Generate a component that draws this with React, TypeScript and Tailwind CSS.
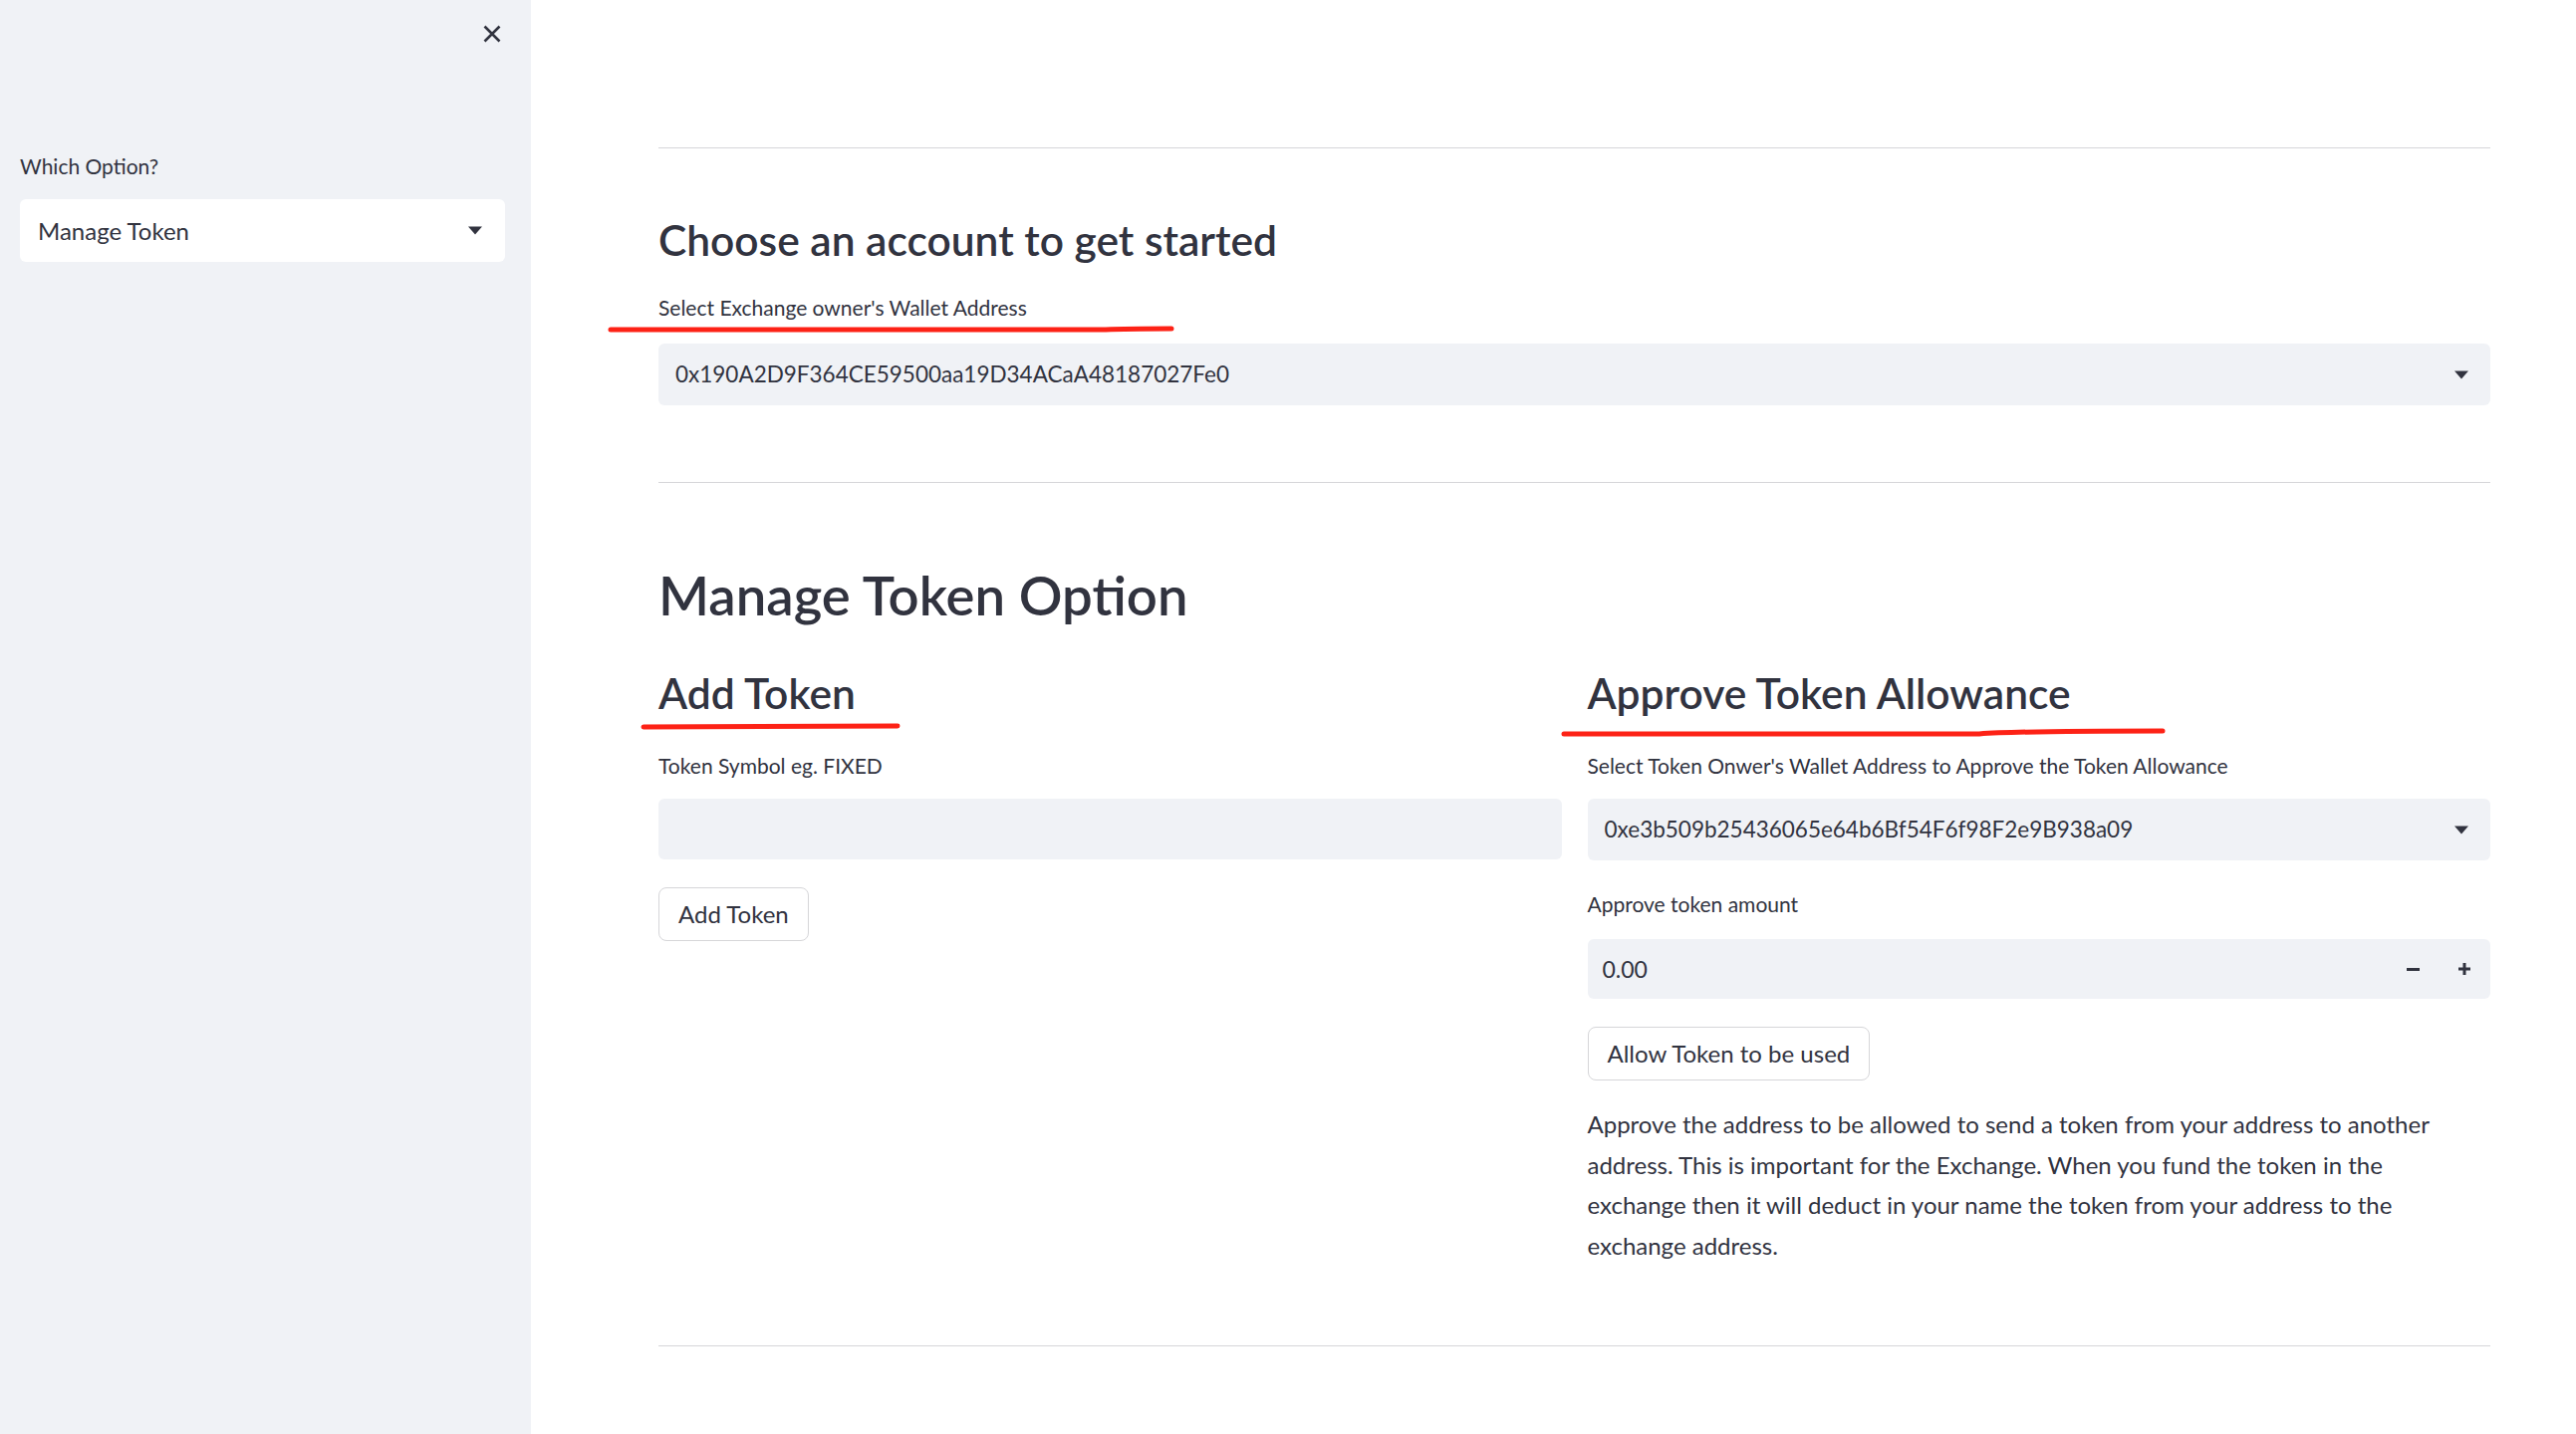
import React from "react";

function Caret() {
  return (
    <svg width="14" height="9" viewBox="0 0 14 9" className="shrink-0">
      <path d="M0 0.5h14L7 8.5z" fill="#31333f" />
    </svg>
  );
}

function SelectBox({ value, white = false }: { value: string; white?: boolean }) {
  return (
    <div
      className={`flex h-[62px] items-center justify-between rounded-md pl-[17px] pr-[22px] ${
        white ? "bg-white" : "bg-[#f0f2f6]"
      }`}
    >
      <span className="text-[22.5px] leading-none">{value}</span>
      <Caret />
    </div>
  );
}

function Label({ children }: { children: React.ReactNode }) {
  return <div className="text-[21px] leading-[24px]">{children}</div>;
}

function Scribble({ className, d }: { className: string; d: string }) {
  // red marker strokes drawn over the screenshot
  return (
    <svg className={`pointer-events-none absolute overflow-visible ${className}`} height="10">
      <path d={d} stroke="#fd2216" strokeWidth="5" strokeLinecap="round" fill="none" />
    </svg>
  );
}

function Button({ children }: { children: React.ReactNode }) {
  return (
    <button className="h-[54px] rounded-lg border border-[#d6d6d9] bg-white px-[19px] text-[24px] leading-none text-[#31333f]">
      {children}
    </button>
  );
}

export default function App() {
  return (
    <div className="flex min-h-screen w-full bg-white font-['Lato',sans-serif] text-[#31333f]">
      <aside className="min-h-screen w-[533px] shrink-0 bg-[#f0f2f6] pl-[20px] pr-[26px] pt-[25px]">
        <div className="flex justify-end pr-[4px]">
          <svg width="18" height="18" viewBox="0 0 18 18">
            <path d="M1.5 1.5l15 15M16.5 1.5l-15 15" stroke="#31333f" strokeWidth="2.6" />
          </svg>
        </div>
        <div className="mt-[112px]">
          <Label>Which Option?</Label>
        </div>
        <div className="mt-[21px]">
          <div className="flex h-[63px] items-center justify-between rounded-md bg-white pl-[18px] pr-[23px]">
            <span className="text-[24px] leading-none">Manage Token</span>
            <Caret />
          </div>
        </div>
      </aside>

      <main className="flex-1 pl-[128px] pr-[86px] pt-[148px]">
        <hr className="border-0 border-t border-[#d6d6d9]" />
        <h3 className="mt-[68px] text-[42.5px] font-semibold leading-[48px]">
          Choose an account to get started
        </h3>
        <div className="relative mt-[32px]">
          <Label>Select Exchange owner's Wallet Address</Label>
          <Scribble className="left-[-51px] top-[29px] w-[575px]" d="M3 5 L500 5 Q520 4 566 4" />
        </div>
        <div className="mt-[24px]">
          <SelectBox value="0x190A2D9F364CE59500aa19D34ACaA48187027Fe0" />
        </div>
        <hr className="mt-[77px] border-0 border-t border-[#d6d6d9]" />
        <h2 className="mt-[80px] text-[54.5px] font-semibold leading-[64px]">Manage Token Option</h2>

        <div className="mt-[43px] grid grid-cols-2 gap-x-[26px]">
          <div className="flex flex-col items-start">
            <div className="relative">
              <h3 className="text-[42.5px] font-semibold leading-[48px]">Add Token</h3>
              <Scribble className="left-[-18px] top-[52px] w-[265px]" d="M3 6 L258 5" />
            </div>
            <div className="mt-[37px]">
              <Label>Token Symbol eg. FIXED</Label>
            </div>
            <div className="mt-[21px] h-[61px] w-full rounded-md bg-[#f0f2f6]" />
            <div className="mt-[28px]">
              <Button>Add Token</Button>
            </div>
          </div>

          <div className="flex flex-col">
            <div className="relative">
              <h3 className="text-[42.5px] font-semibold leading-[48px]">Approve Token Allowance</h3>
              <Scribble className="left-[-27px] top-[59px] w-[612px]" d="M3 6 L420 6 Q460 3 604 3" />
            </div>
            <div className="mt-[37px]">
              <Label>Select Token Onwer's Wallet Address to Approve the Token Allowance</Label>
            </div>
            <div className="mt-[21px]">
              <SelectBox value="0xe3b509b25436065e64b6Bf54F6f98F2e9B938a09" />
            </div>
            <div className="mt-[32px]">
              <Label>Approve token amount</Label>
            </div>
            <div className="mt-[23px] flex h-[60px] items-center justify-between rounded-md bg-[#f0f2f6] pl-[15px] pr-[20px]">
              <span className="text-[23px] leading-none">0.00</span>
              <div className="flex items-center gap-[39px]">
                <svg width="13" height="13" viewBox="0 0 13 13">
                  <path d="M0 6.5h13" stroke="#31333f" strokeWidth="3" />
                </svg>
                <svg width="12" height="12" viewBox="0 0 12 12">
                  <path d="M0 6h12M6 0v12" stroke="#31333f" strokeWidth="3" />
                </svg>
              </div>
            </div>
            <div className="mt-[28px]">
              <Button>Allow Token to be used</Button>
            </div>
            <p className="mt-[24px] text-[24px] leading-[40.6px]">
              Approve the address to be allowed to send a token from your address to another
              <br />
              address. This is important for the Exchange. When you fund the token in the
              <br />
              exchange then it will deduct in your name the token from your address to the
              <br />
              exchange address.
            </p>
          </div>
        </div>
        <hr className="mt-[80px] border-0 border-t border-[#d6d6d9]" />
      </main>
    </div>
  );
}
